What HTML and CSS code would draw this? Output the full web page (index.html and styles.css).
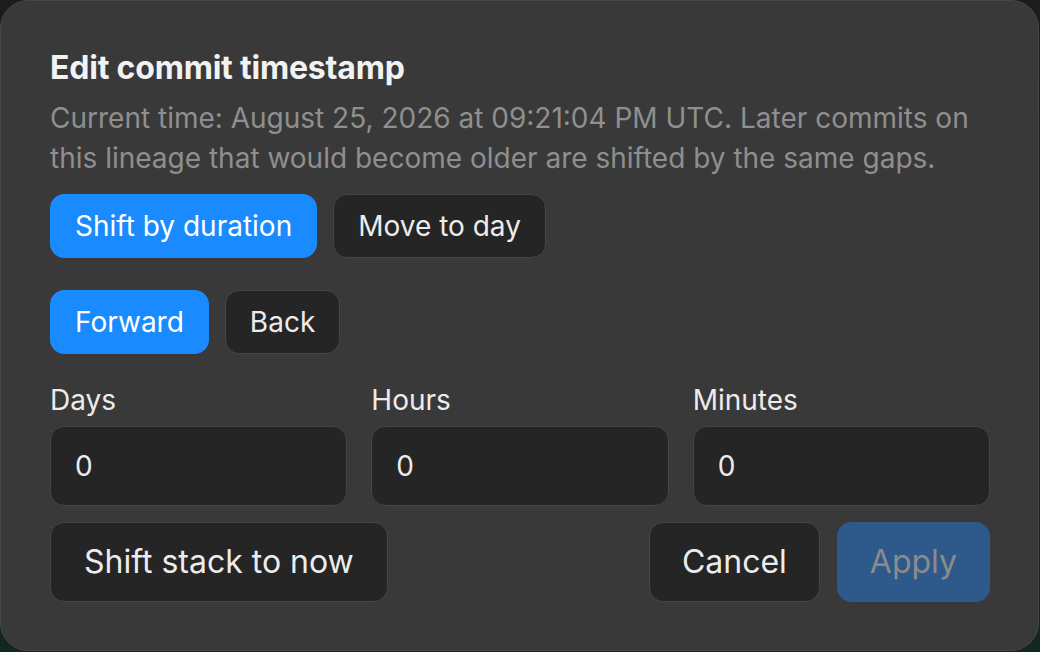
FILE: index.html
```html
<!DOCTYPE html>
<html lang="en">
<head>
<meta charset="utf-8">
<title>Edit commit timestamp</title>
<link rel="stylesheet" href="styles.css">
</head>
<body>
<div class="dialog">
  <h1 class="title">Edit commit timestamp</h1>
  <p class="desc">Current time: August 25, 2026 at 09:21:04 PM UTC. Later commits on this lineage that would become older are shifted by the same gaps.</p>
  <div class="seg">
    <button class="btn active">Shift by duration</button>
    <button class="btn">Move to day</button>
  </div>
  <div class="seg seg-dir">
    <button class="btn active">Forward</button>
    <button class="btn">Back</button>
  </div>
  <div class="fields">
    <label class="field"><span class="label">Days</span><input class="input" value="0"></label>
    <label class="field"><span class="label">Hours</span><input class="input" value="0"></label>
    <label class="field"><span class="label">Minutes</span><input class="input" value="0"></label>
  </div>
  <div class="actions">
    <button class="btn big">Shift stack to now</button>
    <div class="spacer"></div>
    <button class="btn big compact">Cancel</button>
    <button class="btn big compact primary" disabled>Apply</button>
  </div>
</div>
</body>
</html>
```
FILE: styles.css
```css
html, body {
  margin: 0;
  padding: 0;
  height: 100%;
}
body {
  background: linear-gradient(180deg, #1c1c1c 0%, #18201c 60%, #13271d 100%);
  font-family: Inter, "Noto Sans", sans-serif;
  overflow: hidden;
}
.dialog {
  box-sizing: border-box;
  width: 1039px;
  height: 651px;
  margin: 0;
  border: 1px solid #474747;
  border-radius: 28px;
  background: #393939;
  padding: 47px 48px 48px 49px;
  display: flex;
  flex-direction: column;
}
.title {
  margin: 0;
  font-size: 32px;
  line-height: 40px;
  font-weight: 700;
  letter-spacing: -0.2px;
  color: #f2f2f2;
}
.desc {
  margin: 10px 0 0;
  font-size: 28px;
  line-height: 40px;
  color: #8f8f8f;
}
.seg {
  display: flex;
  gap: 16px;
  margin-top: 16px;
}
.seg-dir {
  margin-top: 32px;
}
.btn {
  font-family: inherit;
  font-size: 28px;
  line-height: 32px;
  padding: 15px 24px;
  border-radius: 14px;
  border: 1px solid #454545;
  background: #252525;
  color: #ececec;
  cursor: pointer;
}
.btn.active {
  background: #1a8bff;
  border-color: #1a8bff;
  color: #ffffff;
}
.fields {
  display: grid;
  grid-template-columns: repeat(3, 1fr);
  gap: 24px;
  margin-top: 28px;
}
.field {
  display: flex;
  flex-direction: column;
  gap: 8px;
}
.label {
  font-size: 28px;
  line-height: 36px;
  color: #ececec;
}
.input {
  box-sizing: border-box;
  width: 100%;
  height: 80px;
  font-family: inherit;
  font-size: 28px;
  color: #ececec;
  background: #252525;
  border: 1px solid #454545;
  border-radius: 14px;
  padding: 0 24px;
  outline: none;
}
.actions {
  display: flex;
  gap: 17px;
  margin-top: 16px;
}
.spacer {
  flex: 1;
}
.btn.big {
  font-size: 32px;
  line-height: 38px;
  padding: 20px 33px;
}
.btn.big.compact {
  padding: 20px 32px;
}
.btn.primary {
  background: #2d5a8b;
  border-color: #2d5a8b;
  color: #8b8b8b;
}
```
